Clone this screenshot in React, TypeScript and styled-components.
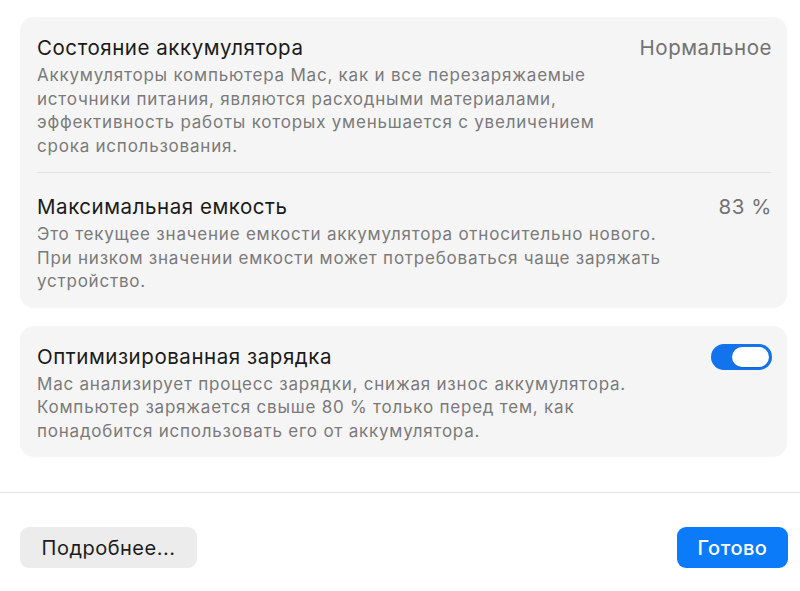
import React from 'react';
import styled, { createGlobalStyle } from 'styled-components';

const GlobalStyle = createGlobalStyle`
  html, body {
    margin: 0;
    padding: 0;
    background: #ffffff;
  }
  body {
    font-family: Inter, "Noto Sans", "Liberation Sans", sans-serif;
    -webkit-font-smoothing: antialiased;
  }
`;

interface Section {
  title: string;
  value?: string;
  lines: string[];
  toggle?: boolean;
}

const healthSections: Section[] = [
  {
    title: 'Состояние аккумулятора',
    value: 'Нормальное',
    lines: [
      'Аккумуляторы компьютера Mac, как и все перезаряжаемые',
      'источники питания, являются расходными материалами,',
      'эффективность работы которых уменьшается с увеличением',
      'срока использования.',
    ],
  },
  {
    title: 'Максимальная емкость',
    value: '83 %',
    lines: [
      'Это текущее значение емкости аккумулятора относительно нового.',
      'При низком значении емкости может потребоваться чаще заряжать',
      'устройство.',
    ],
  },
];

const chargingSection: Section = {
  title: 'Оптимизированная зарядка',
  toggle: true,
  lines: [
    'Mac анализирует процесс зарядки, снижая износ аккумулятора.',
    'Компьютер заряжается свыше 80 % только перед тем, как',
    'понадобится использовать его от аккумулятора.',
  ],
};

const SectionRow: React.FC<{ section: Section; first?: boolean }> = ({ section, first }) => (
  <Row $first={first}>
    <Head>
      <Title>{section.title}</Title>
      {section.value && <Value>{section.value}</Value>}
      {section.toggle && (
        <Toggle>
          <Knob />
        </Toggle>
      )}
    </Head>
    <Description>
      {section.lines.map((line) => (
        <span key={line}>{line}</span>
      ))}
    </Description>
  </Row>
);

const App: React.FC = () => {
  return (
    <>
      <GlobalStyle />
      <Window>
        <Content>
          <Card>
            {healthSections.map((s, i) => (
              <React.Fragment key={s.title}>
                {i > 0 && <Divider />}
                <SectionRow section={s} first={i === 0} />
              </React.Fragment>
            ))}
          </Card>
          <Card>
            <SectionRow section={chargingSection} first />
          </Card>
        </Content>
        <Footer>
          <SecondaryButton>Подробнее...</SecondaryButton>
          <PrimaryButton>Готово</PrimaryButton>
        </Footer>
      </Window>
    </>
  );
};

export default App;

const Window = styled.div`
  width: 800px;
  height: 591px;
  display: flex;
  flex-direction: column;
  background: #ffffff;
  overflow: hidden;
`;

const Content = styled.div`
  display: flex;
  flex-direction: column;
  gap: 18px;
  padding: 17px 13px 35px 20px;
  border-bottom: 1px solid #e2e2e2;
`;

const Card = styled.div`
  background: #f5f5f5;
  border-radius: 14px;
  padding: 0 15px 0 17px;
`;

const Row = styled.div<{ $first?: boolean }>`
  padding: ${(p) => (p.$first ? '19px' : '22px')} 0 14px;
`;

const Head = styled.div`
  display: flex;
  align-items: center;
  justify-content: space-between;
  height: 24px;
`;

const Title = styled.div`
  font-size: 20.5px;
  line-height: 24px;
  letter-spacing: 0.55px;
  color: #1a1a1a;
`;

const Value = styled.div`
  font-size: 20.5px;
  line-height: 24px;
  letter-spacing: 0.55px;
  color: #727272;
`;

const Description = styled.div`
  display: flex;
  flex-direction: column;
  margin-top: 4px;
  font-size: 17px;
  line-height: 23.5px;
  letter-spacing: 0.78px;
  color: #7a7a7a;
`;

const Divider = styled.div`
  height: 1px;
  background: #e3e3e3;
  margin-right: 1px;
`;

const Toggle = styled.div`
  width: 61px;
  height: 26px;
  border-radius: 13px;
  background: #1273ec;
  display: flex;
  align-items: center;
  justify-content: flex-end;
  padding: 0 3px;
  box-sizing: border-box;
`;

const Knob = styled.div`
  width: 37px;
  height: 20px;
  border-radius: 10px;
  background: #ffffff;
  box-shadow: 0 0.5px 1px rgba(0, 0, 0, 0.2);
`;

const Footer = styled.div`
  flex: 1;
  display: flex;
  align-items: flex-start;
  justify-content: space-between;
  padding: 34px 12px 0 20px;
`;

const ButtonBase = styled.button`
  height: 41px;
  border: none;
  border-radius: 9px;
  font-family: inherit;
  font-size: 20px;
  letter-spacing: 0.5px;
  padding: 0;
`;

const SecondaryButton = styled(ButtonBase)`
  width: 177px;
  background: #ececec;
  color: #1d1d1d;
`;

const PrimaryButton = styled(ButtonBase)`
  width: 111px;
  background: #0c7bfa;
  color: #ffffff;
  font-weight: 500;
`;
